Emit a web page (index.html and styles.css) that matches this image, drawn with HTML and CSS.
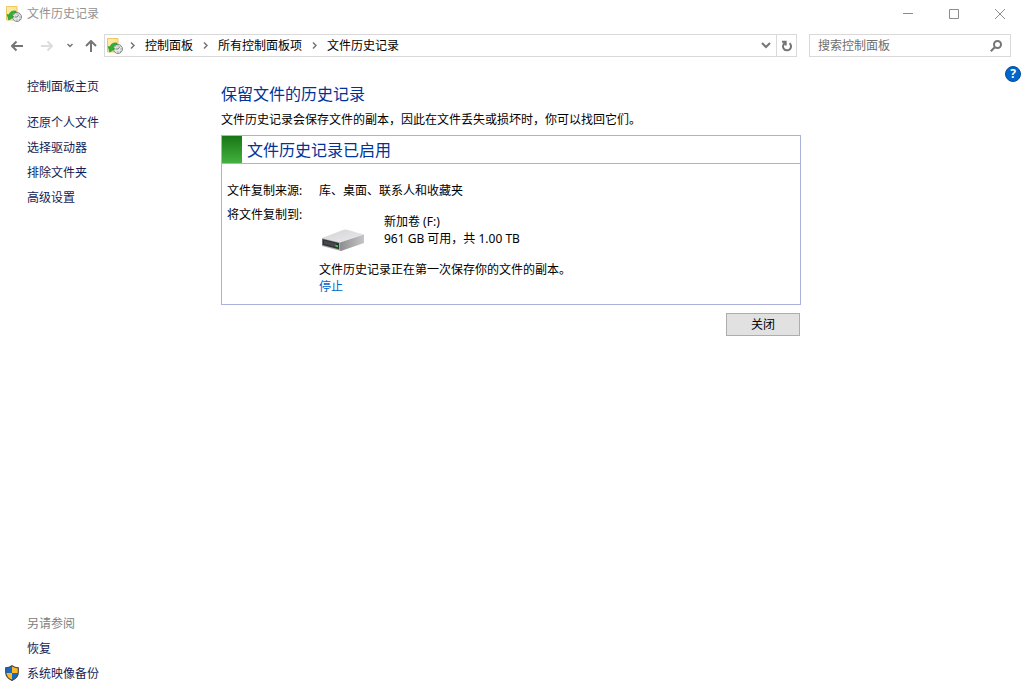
FILE: index.html
```html
<!DOCTYPE html>
<html lang="zh-CN">
<head>
  <meta charset="UTF-8">
  <meta name="viewport" content="width=device-width, initial-scale=1.0">
  <title>文件历史记录</title>

  <link rel="stylesheet" href="styles.css">
</head>
<body>
  <!-- shared icon -->
  <svg class="defs" aria-hidden="true">
    <defs>
      <linearGradient id="folderFill" x1="0" y1="0" x2="1" y2="1">
        <stop offset="0" stop-color="#fff0b0"/>
        <stop offset="1" stop-color="#f8d778"/>
      </linearGradient>
      <symbol id="history" viewBox="0 0 16 16">
        <path d="M.5.5h10.500v13.500H.5z" fill="url(#folderFill)" stroke="#ecc765"/>
        <circle cx="11" cy="11" r="4.500" fill="#e6e8e8" stroke="#868b8b"/>
        <path d="M11 11l2-2.500M11 11H8.500M11 7.500v1M11 13.500v1M13.500 11h1M8.600 8.600l.6.6M13 13l.6.6" stroke="#606666" stroke-width=".8" fill="none"/>
        <path d="M10 5.200C6.500 4.300 3.600 6 3.200 9L1.200 8.500 2.800 14 7.800 10.800 6 10C6.300 7.800 7.600 6.400 10 6.600z" fill="#2bb33a" stroke="#168b27" stroke-width=".6"/>
      </symbol>
    </defs>
  </svg>

  <header class="titlebar">
    <svg class="icon"><use href="#history"/></svg>
    <h1>文件历史记录</h1>
    <div class="window-buttons">
      <button type="button" aria-label="最小化"><svg width="10" height="10" viewBox="0 0 10 10"><path d="M0 4.500h10"/></svg></button>
      <button type="button" aria-label="最大化"><svg width="10" height="10" viewBox="0 0 10 10"><path d="M.5.5h9v9h-9z"/></svg></button>
      <button type="button" aria-label="关闭窗口"><svg width="10" height="10" viewBox="0 0 10 10"><path d="M0 0l10 10M10 0L0 10"/></svg></button>
    </div>
  </header>

  <nav class="toolbar">
    <div class="history-buttons">
      <button type="button" class="back" aria-label="后退"><svg width="12" height="12" viewBox="0 0 12 12"><path d="M12 6H1M5.500 1.500L1 6l4.500 4.500"/></svg></button>
      <button type="button" class="forward" aria-label="前进" disabled><svg width="12" height="12" viewBox="0 0 12 12"><path d="M0 6h11M6.500 1.500L11 6l-4.500 4.500"/></svg></button>
      <button type="button" class="recent" aria-label="最近的位置"><svg width="6" height="5" viewBox="0 0 6 5"><path d="M.5 1L3 3.500 5.500 1"/></svg></button>
      <button type="button" class="up" aria-label="上移"><svg width="12" height="12" viewBox="0 0 12 12"><path d="M6 12V1M1 6l5-5 5 5"/></svg></button>
    </div>
    <div class="address">
      <svg class="icon"><use href="#history"/></svg>
      <svg class="sep" width="5" height="7" viewBox="0 0 5 7"><path d="M1 .5l3 3-3 3"/></svg>
      <a href="#">控制面板</a>
      <svg class="sep" width="5" height="7" viewBox="0 0 5 7"><path d="M1 .5l3 3-3 3"/></svg>
      <a href="#">所有控制面板项</a>
      <svg class="sep" width="5" height="7" viewBox="0 0 5 7"><path d="M1 .5l3 3-3 3"/></svg>
      <a href="#">文件历史记录</a>
      <button type="button" class="drop" aria-label="以前的位置"><svg width="10" height="7" viewBox="0 0 10 7"><path d="M1 1l4 4 4-4"/></svg></button>
      <button type="button" class="refresh" aria-label="刷新"><svg width="11" height="12" viewBox="0 0 11 12"><path d="M8.500 3.200A4 4 0 1 1 4 2.900M1 1.800h3.700V5.500"/></svg></button>
    </div>
    <form class="search">
      <input type="text" placeholder="搜索控制面板" aria-label="搜索控制面板">
      <button type="button" aria-label="搜索"><svg width="12" height="12" viewBox="0 0 12 12"><circle cx="7.500" cy="4.500" r="3.500"/><path d="M5 7L.8 11.200"/></svg></button>
    </form>
  </nav>

  <div class="page">
    <aside class="sidebar">
      <a class="home" href="#">控制面板主页</a>
      <a href="#">还原个人文件</a>
      <a href="#">选择驱动器</a>
      <a href="#">排除文件夹</a>
      <a href="#">高级设置</a>

      <div class="see-also">
        <span>另请参阅</span>
        <a href="#">恢复</a>
        <a class="shielded" href="#">
          <svg width="14" height="17" viewBox="0 0 14 17">
            <path d="M7 .7C5.200 2 3 2.700.7 2.800V7c0 4 2.500 6.800 6.300 8.400z" fill="#1769c4"/>
            <path d="M7 .7C8.800 2 11 2.700 13.300 2.800V7c0 4-2.500 6.800-6.300 8.400z" fill="#fdb827"/>
            <path d="M.7 8H7v7.400C3.300 13.800 1 11.500.7 8z" fill="#fdb827"/>
            <path d="M13.300 8H7v7.400C10.700 13.800 13 11.500 13.300 8z" fill="#1769c4"/>
            <path d="M7 .7C5.200 2 3 2.700.7 2.800V7c0 4 2.500 6.800 6.300 8.400 3.800-1.600 6.300-4.400 6.300-8.400V2.800C11 2.700 8.800 2 7 .7z" fill="none" stroke="#414b52" stroke-width="1.200"/>
          </svg>
          系统映像备份
        </a>
      </div>
    </aside>

    <main class="content">
      <h2>保留文件的历史记录</h2>
      <p>文件历史记录会保存文件的副本，因此在文件丢失或损坏时，你可以找回它们。</p>

      <section class="status">
        <h3>文件历史记录已启用</h3>
        <dl>
          <dt>文件复制来源:</dt>
          <dd>库、桌面、联系人和收藏夹</dd>
          <dt>将文件复制到:</dt>
          <dd>
            <div class="drive">
              <svg width="44" height="24" viewBox="0 0 44 24">
                <defs>
                  <linearGradient id="driveTop" x1="0" y1="0" x2="1" y2="1">
                    <stop offset="0" stop-color="#d2d2d4"/>
                    <stop offset="1" stop-color="#ececee"/>
                  </linearGradient>
                  <linearGradient id="driveSide" x1="0" y1="0" x2="1" y2="0">
                    <stop offset="0" stop-color="#8e8e91"/>
                    <stop offset="1" stop-color="#c5c5c8"/>
                  </linearGradient>
                </defs>
                <path d="M1 10L22 2q2-.7 4-.2L43 6.500 19 14.500z" fill="url(#driveTop)"/>
                <path d="M19 14.500L43 6.500V15L20 23l-1-.2z" fill="url(#driveSide)"/>
                <path d="M1 10l18 4.500v8.300L1 18z" fill="#a9a9ac"/>
                <path d="M1.500 11L18 15v6.300L1.500 17z" fill="#303236"/>
                <path d="M3 12.500l12 3v3.500L3 16z" fill="#45484c"/>
                <path d="M14.500 16.800l2.500.6v1.800l-2.500-.6z" fill="#2fe33b"/>
              </svg>
              <div>新加卷 (F:)<br>961 GB 可用，共 1.00 TB</div>
            </div>
            <div class="progress">文件历史记录正在第一次保存你的文件的副本。<br><a href="#">停止</a></div>
          </dd>
        </dl>
      </section>

      <button type="button" class="close">关闭</button>
    </main>

    <a class="help" href="#" aria-label="帮助">?</a>
  </div>
</body>
</html>
```

FILE: styles.css
```css
:root {
  --heading: #003399;
  --link: #0066cc;
  --task: #151c55;
  --line: #d9d9d9;
  --panel-line: #acb1d9;
}

* {
  box-sizing: border-box;
}

body {
  margin: 0;
  min-height: 100vh;
  display: flex;
  flex-direction: column;
  background: #fff;
  color: #000;
  font-family: "Noto Sans", "Noto Sans CJK SC", sans-serif;
  font-size: 12px;
  line-height: 17px;
}

h1, h2, h3, p, dl, dd {
  margin: 0;
  font-weight: normal;
}

a {
  color: inherit;
  text-decoration: none;
}

a:hover {
  text-decoration: underline;
}

button {
  padding: 0;
  border: none;
  background: none;
  font: inherit;
}

svg {
  display: block;
  flex: none;
}

.defs {
  position: absolute;
  width: 0;
  height: 0;
}

.icon {
  width: 16px;
  height: 16px;
}

/* title bar */
.titlebar {
  display: flex;
  align-items: center;
  height: 27px;
  padding-left: 6px;
}

.titlebar h1 {
  margin-left: 5px;
  font-size: 12px;
  color: #929292;
}

.window-buttons {
  display: flex;
  margin-left: auto;
}

.window-buttons button {
  display: flex;
  align-items: center;
  justify-content: center;
  width: 46px;
  height: 26px;
}

.window-buttons path {
  fill: none;
  stroke: #8c8c8c;
}

/* navigation */
.toolbar {
  display: flex;
  align-items: center;
  padding: 7px 12px 7px 5px;
}

.toolbar button {
  display: flex;
  align-items: center;
  justify-content: center;
}

.toolbar button svg {
  fill: none;
  stroke: #757575;
  stroke-width: 2;
}

.history-buttons {
  display: flex;
  width: 99px;
}

.history-buttons button {
  height: 23px;
}

.history-buttons .back,
.history-buttons .up {
  width: 24px;
}

.history-buttons .forward {
  width: 36px;
}

.history-buttons .forward svg {
  stroke: #dcdcdc;
}

.history-buttons .recent {
  width: 10px;
  margin-right: 4px;
}

.history-buttons .recent svg {
  stroke-width: 1.5;
}

.address {
  flex: 1;
  display: flex;
  align-items: center;
  height: 23px;
  padding-left: 2px;
  border: 1px solid var(--line);
}

.sep {
  margin: 0 10px;
  fill: none;
  stroke: #757575;
  stroke-width: 1.5;
}

.icon + .sep {
  margin-left: 7px;
}

.drop {
  width: 20px;
  height: 21px;
  margin-left: auto;
}

.refresh {
  width: 20px;
  height: 21px;
  border-left: 1px solid var(--line);
}

.search {
  display: flex;
  align-items: center;
  width: 202px;
  height: 23px;
  margin-left: 12px;
  padding: 0 8px;
  border: 1px solid var(--line);
}

.search input {
  flex: 1;
  min-width: 0;
  padding: 0;
  border: none;
  outline: none;
  font: inherit;
}

.search input::placeholder {
  color: #6d6d6d;
  opacity: 1;
}

/* page */
.page {
  position: relative;
  flex: 1;
  display: flex;
}

.sidebar {
  display: flex;
  flex-direction: column;
  width: 221px;
  padding: 10px 0 13px 27px;
  line-height: 25px;
  color: var(--task);
}

.sidebar .home {
  margin-bottom: 11px;
}

.see-also {
  display: flex;
  flex-direction: column;
  margin-top: auto;
}

.see-also span {
  color: #808080;
}

.shielded {
  display: flex;
  align-items: center;
  gap: 8px;
  margin-left: -22px;
}

.content {
  display: flex;
  flex-direction: column;
  flex: 0 1 580px;
  padding-top: 18px;
}

.content h2,
.status h3 {
  font-size: 16px;
  line-height: 24px;
  color: var(--heading);
}

.content p {
  margin: 5px 0 7px;
}

.status {
  border: 1px solid var(--panel-line);
}

.status h3 {
  display: flex;
  align-items: center;
  gap: 5px;
  height: 28px;
  border-bottom: 1px solid var(--panel-line);
}

.status h3::before {
  content: "";
  width: 20px;
  height: 27px;
  background: linear-gradient(#177614, #43b13f);
}

.status dl {
  display: grid;
  grid-template-columns: 85px 1fr;
  row-gap: 7px;
  column-gap: 7px;
  padding: 18px 5px 9px;
}

.drive {
  display: flex;
  align-items: flex-start;
  gap: 19px;
  margin: 7px 0 9px 2px;
}

.drive svg {
  margin-top: 15px;
}

.progress a {
  color: var(--link);
}

.close {
  align-self: flex-end;
  width: 74px;
  height: 23px;
  margin: 8px 1px 0 0;
  border: 1px solid #adadad;
  background: #e1e1e1;
}

.help {
  position: absolute;
  top: 2px;
  right: 2px;
  width: 16px;
  height: 16px;
  border: 1px solid #0b4a8f;
  border-radius: 50%;
  background: #0066cc;
  color: #fff;
  font-size: 12px;
  font-weight: bold;
  line-height: 14px;
  text-align: center;
}
```
